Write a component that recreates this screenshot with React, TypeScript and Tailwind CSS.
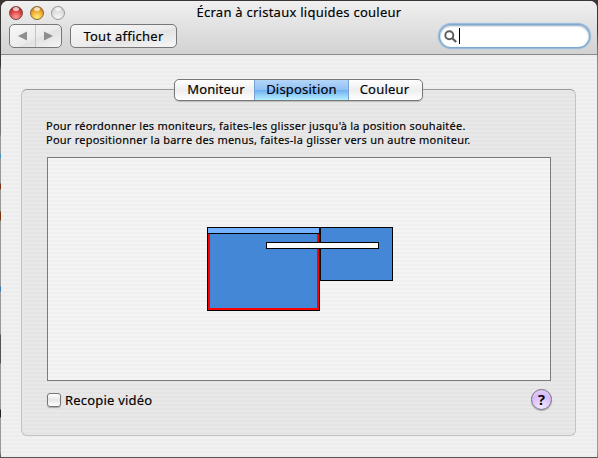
import { useState } from "react";

const stripes =
  "bg-[repeating-linear-gradient(to_bottom,#f1f1f1_0px,#f1f1f1_2px,#ececec_2px,#ececec_4px)]";

function TrafficLight({ className }: { className: string }) {
  return (
    <span
      className={`relative block h-[14px] w-[14px] overflow-hidden rounded-full border ${className}`}
    >
      <span className="absolute left-[3px] top-0 h-[4px] w-[6px] rounded-full bg-white/70" />
    </span>
  );
}

function Toolbar() {
  return (
    <header className="flex h-[54px] flex-col border-b border-[#8b8b8b] bg-gradient-to-b from-[#f0f0f0] to-[#d2d2d2]">
      <div className="grid h-[23px] grid-cols-[188px_1fr_188px] items-center">
        <div className="flex gap-[7px] pl-2">
          <TrafficLight className="border-[#7c4444] bg-[radial-gradient(circle_at_50%_85%,#ff9d98,#d8403f_55%,#8f2222)]" />
          <TrafficLight className="border-[#8d6430] bg-[radial-gradient(circle_at_50%_85%,#fff27a,#eda62f_55%,#a9631c)]" />
          <TrafficLight className="border-[#999999] bg-[radial-gradient(circle_at_50%_85%,#f5f5f5,#dedede_55%,#bdbdbd)]" />
        </div>
        <h1 className="-mt-px whitespace-nowrap text-center text-[13px] leading-[22px] tracking-[0.25px]">
          Écran à cristaux liquides couleur
        </h1>
      </div>
      <div className="flex items-start pl-2">
        <div className="flex h-[24px] w-[53px] rounded-[5px] border border-[#777] bg-[linear-gradient(155deg,#f8f8f8_0%,#ebebeb_55%,#e2e2e2_58%,#f5f5f5_100%)]">
          <button className="flex flex-1 items-center justify-center border-r border-[#c4c4c4]">
            <svg width="9" height="10" viewBox="0 0 9 10">
              <path d="M9 0.5V9.5L0 5Z" fill="#8e8e8e" />
            </svg>
          </button>
          <button className="flex flex-1 items-center justify-center">
            <svg width="9" height="10" viewBox="0 0 9 10">
              <path d="M0 0.5V9.5L9 5Z" fill="#8e8e8e" />
            </svg>
          </button>
        </div>
        <button className="ml-2 h-[24px] w-[107px] whitespace-nowrap rounded-[5px] border border-[#777] bg-[linear-gradient(168deg,#f8f8f8_0%,#ebebeb_55%,#e3e3e3_58%,#f7f7f7_100%)] text-[13px] leading-[22px] tracking-[0.25px]">
          Tout afficher
        </button>
        <label className="ml-auto mr-[8px] mt-[1px] flex h-[22px] w-[149px] items-center rounded-full bg-white pl-[4px] shadow-[0_0_0_1px_#7fa9cf,0_0_1px_2px_#8fb8dd,inset_0_1px_2px_#8aa5bd]">
          <svg width="13" height="13" viewBox="0 0 13 13" fill="none" stroke="#5c5c5c">
            <circle cx="5.3" cy="5.2" r="4" strokeWidth="1.9" />
            <path d="M8.3 8.2L12.2 12" strokeWidth="2.2" />
          </svg>
          <span className="ml-[2px] h-[16px] w-px bg-black" />
        </label>
      </div>
    </header>
  );
}

function Tabs() {
  return (
    <div className="z-10 ml-[153px] flex h-[22px] w-[249px] items-start overflow-hidden rounded-[5px] border border-[#777] bg-gradient-to-b from-white via-[#eeeeee] to-white text-[13px] leading-[18px] shadow-[0_1px_1px_#bbb]">
      <button className="w-[79px] pl-[3px] text-center tracking-[0.1px]">Moniteur</button>
      <button className="-mt-px h-[21px] w-[95px] border-x border-t border-x-[#76a3d4] border-t-[#080863] bg-[linear-gradient(to_bottom,#b5d6f8_0%,#91c2f5_48%,#71b1f2_52%,#b6f0ff_100%)] pb-[2px] text-center tracking-[0.2px]">
        Disposition
      </button>
      <button className="w-[73px] pr-[2px] text-center tracking-[0.2px]">Couleur</button>
    </div>
  );
}

function DisplayArrangement() {
  return (
    <div className="relative h-[224px] w-[504px] border border-[#7b7b7b] bg-[repeating-linear-gradient(to_bottom,#f4f4f4_0px,#f4f4f4_2px,#f0f0f0_2px,#f0f0f0_4px)]">
      <div className="absolute left-[159px] top-[69px] h-[84px] w-[113px] border border-black bg-[#4587d7]">
        <div className="h-[6px] border-b border-black bg-[#74b2ff]" />
        <div className="h-[76px] border-x-2 border-b-2 border-[#ff0000]" />
      </div>
      <div className="absolute left-[272px] top-[69px] h-[54px] w-[73px] border border-black bg-[#4587d7]" />
      <div className="absolute left-[218px] top-[84px] h-[7px] w-[113px] border border-black bg-white" />
    </div>
  );
}

export default function App() {
  const [mirror, setMirror] = useState(false);
  return (
    <div className="flex h-[458px] w-[598px] overflow-hidden bg-[#3b3535] font-['Noto_Sans','Open_Sans',sans-serif] text-black [-webkit-text-stroke:0.15px_black]">
      <div className="w-px bg-[linear-gradient(to_bottom,#3b3535_0px,#3b3535_65px,#777_70px,#777_135px,#999_136px,#999_153px,#4a8fc0_154px,#4a8fc0_158px,#999_159px,#999_183px,#7a3510_184px,#7a3510_189px,#999_190px,#999_211px,#7a3510_212px,#7a3510_220px,#999_221px,#999_286px,#3a78b8_287px,#3a78b8_291px,#999_292px,#999_334px,#555_335px,#555_363px,#999_364px,#999_409px,#222_410px,#222_417px,#999_418px,#999_452px,#555_456px)]" />
      <div className="h-[458px] w-[596px] border-b border-b-[#555] pt-px">
        <div className={`flex h-[456px] w-[596px] flex-col overflow-hidden rounded-t-[7px] ${stripes}`}>
          <Toolbar />
          <main className="flex flex-col pl-[20px] pt-[24px]">
            <div className="flex w-[555px]">
              <Tabs />
            </div>
            <section className="-mt-[12px] h-[347px] w-[555px] rounded-[6px] border border-[#c2c2c2] border-t-[#999] bg-[repeating-linear-gradient(to_bottom,#e8e8e8_0px,#e8e8e8_2px,#e4e4e4_2px,#e4e4e4_4px)] pl-[25px] pt-[29px]">
              <div className="-ml-px h-[38px] whitespace-nowrap text-[11px] leading-[14px]">
                <p className="tracking-[0.23px]">Pour réordonner les moniteurs, faites-les glisser jusqu'à la position souhaitée.</p>
                <p className="tracking-[0.23px]">Pour repositionner la barre des menus, faites-la glisser vers un autre moniteur.</p>
              </div>
              <DisplayArrangement />
              <div className="flex w-[504px] items-start justify-between pt-[8px]">
                <button
                  role="checkbox"
                  aria-checked={mirror}
                  onClick={() => setMirror(!mirror)}
                  className="flex items-center gap-[4px] pt-[2px] text-[13px] leading-[18px] tracking-[0.2px]"
                >
                  <span className="h-[14px] w-[14px] rounded-[3px] border border-[#777] bg-gradient-to-b from-white via-[#e6e6e6] to-white shadow-[0_1px_1px_#aaa]" />
                  <span>Recopie vidéo</span>
                </button>
                <button className="-mr-px h-[21px] w-[21px] rounded-full border border-[#776f80] bg-[radial-gradient(circle_at_50%_90%,#f5eaff,#d6bcfa_60%,#e5d6fa)] text-center text-[15px] font-semibold leading-[19px] shadow-[0_1px_1px_#aaa]">
                  ?
                </button>
              </div>
            </section>
          </main>
        </div>
      </div>
      <div className="w-px bg-[linear-gradient(to_bottom,#3b3535_0px,#3b3535_30px,#8c8c8c_60px,#9b9b9b_450px,#777_458px)]" />
    </div>
  );
}
